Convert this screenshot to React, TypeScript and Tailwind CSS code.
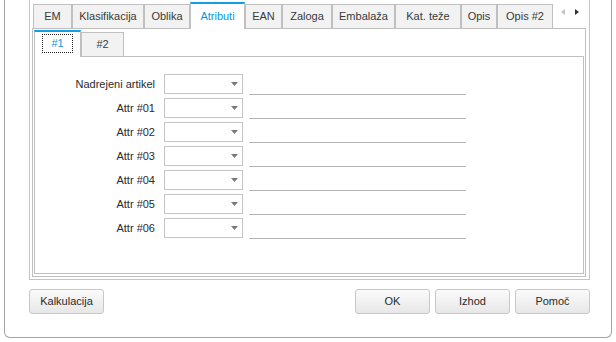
import React from "react";

const tabs: { label: string; w: string; active?: boolean }[] = [
  { label: "EM", w: "w-[39px]" },
  { label: "Klasifikacija", w: "w-[72px]" },
  { label: "Oblika", w: "w-[46px]" },
  { label: "Atributi", w: "w-[55px]", active: true },
  { label: "EAN", w: "w-[37px]" },
  { label: "Zaloga", w: "w-[50px]" },
  { label: "Embalaža", w: "w-[63px]" },
  { label: "Kat. teže", w: "w-[66px]" },
  { label: "Opis", w: "w-[36px]" },
  { label: "Opis #2", w: "w-[56px]" },
];

const rows = [
  "Nadrejeni artikel",
  "Attr #01",
  "Attr #02",
  "Attr #03",
  "Attr #04",
  "Attr #05",
  "Attr #06",
];

function Combo() {
  return (
    <div className="w-[79px] h-[20px] border border-[#c4c4c4] bg-white flex items-center justify-end pr-[4px]">
      <svg width="7" height="4" viewBox="0 0 7 4">
        <path d="M0 0 H7 L3.5 4 Z" fill="#7a7a7a" />
      </svg>
    </div>
  );
}

function Btn({ children }: { children: React.ReactNode }) {
  return (
    <div className="w-[75px] h-[25px] rounded-[3px] border border-[#c8c8c8] bg-gradient-to-b from-[#fbfbfb] to-[#e7e7e7] flex items-center justify-center text-[11px] text-[#2a2a2a]">
      {children}
    </div>
  );
}

export default function App() {
  return (
    <div className="w-[616px] h-[342px] bg-white font-['Liberation_Sans',Arial,sans-serif] text-[11px] text-[#3a3a3a] overflow-hidden">
      <div className="ml-[4px] w-[608px] h-[338px] border-x border-b border-[#a4a4a4] rounded-b-[6px]">
        <div className="ml-[24px] w-[561px]">
          {/* box1 */}
          <div className="h-[280px] border-x border-b border-[#c4c4c4] pl-[2px]">
            {/* box2 */}
            <div className="w-[554px] h-[277px] flex flex-col">
              {/* tab strip */}
              <div className="h-[28px] flex items-end pl-[1px]">
                {tabs.map((t) =>
                  t.active ? (
                    <div
                      key={t.label}
                      className={`${t.w} h-[27px] -mb-px relative z-10 bg-white border-x border-[#c0c0c0] border-t-2 border-t-[#12a0e4] flex items-center justify-center text-[#0b96d8] pb-[1px]`}
                    >
                      {t.label}
                    </div>
                  ) : (
                    <div
                      key={t.label}
                      className={`${t.w} h-[24px] border border-b-0 border-[#c0c0c0] bg-[#f2f2f2] flex items-center justify-center text-[#3a3a3a]`}
                    >
                      {t.label}
                    </div>
                  )
                )}
                <div className="self-start mt-[9px] ml-[8px] flex items-center gap-[10px]">
                  <svg width="4" height="6" viewBox="0 0 4 6">
                    <path d="M4 0 V6 L0 3 Z" fill="#c4c4c4" />
                  </svg>
                  <svg width="4" height="6" viewBox="0 0 4 6">
                    <path d="M0 0 V6 L4 3 Z" fill="#333" />
                  </svg>
                </div>
              </div>
              {/* panel */}
              <div className="h-[249px] border border-[#c0c0c0] flex flex-col">
                {/* sub tab strip */}
                <div className="h-[27px] flex items-end pl-[1px]">
                  <div className="w-[47px] h-[27px] -mb-px relative z-10 bg-white border-x border-[#c0c0c0] border-t-2 border-t-[#12a0e4] flex items-center justify-center pb-[2px]">
                    <div className="w-[31px] h-[19px] border border-dotted border-[#222] flex items-center justify-center text-[#0b96d8]">
                      #1
                    </div>
                  </div>
                  <div className="w-[43px] h-[24px] border border-b-0 border-[#c0c0c0] bg-[#f2f2f2] flex items-center justify-center text-[#3a3a3a]">
                    #2
                  </div>
                </div>
                {/* box3 */}
                <div className="ml-[1px] mr-[1px] h-[218px] border border-[#c0c0c0] pt-[17px] flex flex-col gap-[4px]">
                  {rows.map((r) => (
                    <div key={r} className="h-[20px] flex items-center">
                      <div className="w-[120px] text-right text-[#2a2a2a] whitespace-nowrap">{r}</div>
                      <div className="ml-[9px]">
                        <Combo />
                      </div>
                      <div className="ml-[6px] w-[217px] h-[21px] self-start border-b border-[#b4b4b4]" />
                    </div>
                  ))}
                </div>
              </div>
            </div>
          </div>
          {/* buttons */}
          <div className="mt-[9px] flex items-center">
            <Btn>Kalkulacija</Btn>
            <div className="ml-auto flex gap-[5px]">
              <Btn>OK</Btn>
              <Btn>Izhod</Btn>
              <Btn>Pomoč</Btn>
            </div>
          </div>
        </div>
      </div>
    </div>
  );
}
